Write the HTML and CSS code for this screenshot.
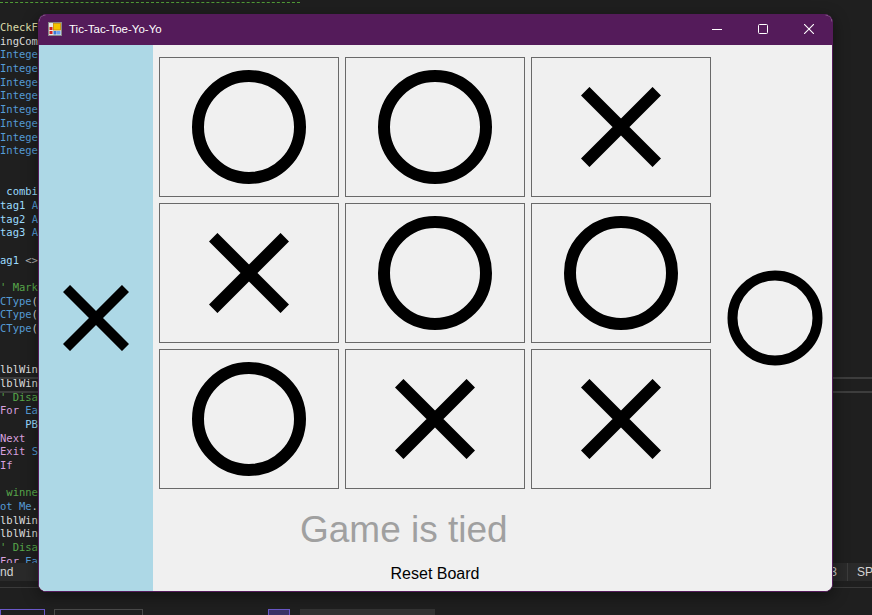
FILE: index.html
```html
<!DOCTYPE html>
<html lang="en">
<head>
<meta charset="utf-8">
<title>Tic-Tac-Toe-Yo-Yo</title>
<link rel="stylesheet" href="styles.css">
</head>
<body>
<div class="desktop">
  <div class="editor">
    <div class="dash"></div>
    <div class="code">
      <div class="ln"><span class="fn">CheckFor</span></div>
      <div class="ln"><span class="df">ingCombi</span></div>
      <div class="ln"><span class="kw">Integer</span></div>
      <div class="ln"><span class="kw">Integer</span></div>
      <div class="ln"><span class="kw">Integer</span></div>
      <div class="ln"><span class="kw">Integer</span></div>
      <div class="ln"><span class="kw">Integer</span></div>
      <div class="ln"><span class="kw">Integer</span></div>
      <div class="ln"><span class="kw">Integer</span></div>
      <div class="ln"><span class="kw">Integer</span></div>
      <div class="ln"> </div>
      <div class="ln"> </div>
      <div class="ln"> <span class="id">combin</span></div>
      <div class="ln"><span class="id">tag1</span> <span class="kw">As</span></div>
      <div class="ln"><span class="id">tag2</span> <span class="kw">As</span></div>
      <div class="ln"><span class="id">tag3</span> <span class="kw">As</span></div>
      <div class="ln"> </div>
      <div class="ln"><span class="id">ag1</span> <span class="op">&lt;&gt;</span></div>
      <div class="ln"> </div>
      <div class="ln"><span class="cm">' Mark</span></div>
      <div class="ln"><span class="kw">CType</span><span class="df">(M</span></div>
      <div class="ln"><span class="kw">CType</span><span class="df">(M</span></div>
      <div class="ln"><span class="kw">CType</span><span class="df">(M</span></div>
      <div class="ln"> </div>
      <div class="ln"> </div>
      <div class="ln sep"><span class="df">lblWinn</span></div>
      <div class="ln sep"><span class="df">lblWinn</span></div>
      <div class="ln"><span class="cm">' Disab</span></div>
      <div class="ln"><span class="ct">For</span> <span class="kw">Eac</span></div>
      <div class="ln">    <span class="id">PB.</span></div>
      <div class="ln"><span class="ct">Next</span></div>
      <div class="ln"><span class="ct">Exit</span> <span class="kw">Su</span></div>
      <div class="ln"><span class="ct">If</span></div>
      <div class="ln"> </div>
      <div class="ln"> <span class="cm">winner</span></div>
      <div class="ln"><span class="kw">ot Me</span><span class="df">.C</span></div>
      <div class="ln"><span class="df">lblWinn</span></div>
      <div class="ln"><span class="df">lblWinn</span></div>
      <div class="ln"><span class="cm">' Disab</span></div>
      <div class="ln"><span class="ct">For</span> <span class="kw">Eac</span></div>
    </div>
  </div>
  <div class="statusbar">
    <span class="st-left">nd</span>
    <span class="st-pos">Ch 3</span>
    <span class="st-box">SPC</span>
  </div>
  <div class="rule"></div>
  <div class="tabs">
    <span class="tab tab-a"></span>
    <span class="tab tab-b"></span>
    <span class="tab tab-c"></span>
    <span class="tab tab-d"></span>
  </div>

  <div class="window">
    <div class="titlebar">
      <svg class="app-icon" width="14" height="14" viewBox="0 0 14 14">
        <rect x="0.5" y="0.5" width="13" height="13" fill="#e8e8e8" stroke="#8a8a8a"/>
        <rect x="1.5" y="5" width="3" height="3" fill="#d02020"/>
        <rect x="1.5" y="9" width="3" height="3" fill="#d02020"/>
        <rect x="5.5" y="1.5" width="7" height="6.5" fill="#f5c400" stroke="#c88a00" stroke-width="0.8"/>
        <rect x="5.5" y="9" width="3" height="3.5" fill="#3a78d8"/>
        <rect x="9" y="9" width="3.5" height="3.5" fill="#6aa0f0"/>
      </svg>
      <span class="title">Tic-Tac-Toe-Yo-Yo</span>
      <div class="caption">
        <span class="cap-btn"><svg width="10" height="10" viewBox="0 0 10 10"><line x1="0" y1="5.5" x2="10" y2="5.5" stroke="#fff" stroke-width="1"/></svg></span>
        <span class="cap-btn"><svg width="10" height="10" viewBox="0 0 10 10"><rect x="0.5" y="0.5" width="9" height="9" rx="1" fill="none" stroke="#fff" stroke-width="1"/></svg></span>
        <span class="cap-btn"><svg width="10" height="10" viewBox="0 0 10 10"><path d="M0 0 L10 10 M10 0 L0 10" stroke="#fff" stroke-width="1.1"/></svg></span>
      </div>
    </div>
    <div class="client">
      <div class="side-panel">
        <svg class="mark" width="66" height="66" viewBox="0 0 66 66"><path d="M3.5 3.5 L62.5 62.5 M62.5 3.5 L3.5 62.5" stroke="#000" stroke-width="10"/></svg>
      </div>
      <div class="main">
        <div class="play">
          <div class="board">
            <div class="cell"><svg width="114" height="114" viewBox="0 0 114 114"><circle cx="57" cy="57" r="51" fill="none" stroke="#000" stroke-width="12"/></svg></div>
            <div class="cell"><svg width="114" height="114" viewBox="0 0 114 114"><circle cx="57" cy="57" r="51" fill="none" stroke="#000" stroke-width="12"/></svg></div>
            <div class="cell"><svg width="80" height="80" viewBox="0 0 80 80"><path d="M4.2 4.2 L75.8 75.8 M75.8 4.2 L4.2 75.8" stroke="#000" stroke-width="12"/></svg></div>
            <div class="cell"><svg width="80" height="80" viewBox="0 0 80 80"><path d="M4.2 4.2 L75.8 75.8 M75.8 4.2 L4.2 75.8" stroke="#000" stroke-width="12"/></svg></div>
            <div class="cell"><svg width="114" height="114" viewBox="0 0 114 114"><circle cx="57" cy="57" r="51" fill="none" stroke="#000" stroke-width="12"/></svg></div>
            <div class="cell"><svg width="114" height="114" viewBox="0 0 114 114"><circle cx="57" cy="57" r="51" fill="none" stroke="#000" stroke-width="12"/></svg></div>
            <div class="cell"><svg width="114" height="114" viewBox="0 0 114 114"><circle cx="57" cy="57" r="51" fill="none" stroke="#000" stroke-width="12"/></svg></div>
            <div class="cell"><svg width="80" height="80" viewBox="0 0 80 80"><path d="M4.2 4.2 L75.8 75.8 M75.8 4.2 L4.2 75.8" stroke="#000" stroke-width="12"/></svg></div>
            <div class="cell"><svg width="80" height="80" viewBox="0 0 80 80"><path d="M4.2 4.2 L75.8 75.8 M75.8 4.2 L4.2 75.8" stroke="#000" stroke-width="12"/></svg></div>
          </div>
          <div class="status">Game is tied</div>
          <button class="reset" type="button">Reset Board</button>
        </div>
        <div class="next-turn">
          <svg width="96" height="96" viewBox="0 0 96 96"><circle cx="48" cy="48" r="42.5" fill="none" stroke="#000" stroke-width="10"/></svg>
        </div>
      </div>
    </div>
  </div>
</div>
</body>
</html>
```
FILE: styles.css
```css
* { box-sizing: border-box; }

html, body {
  margin: 0;
  padding: 0;
  background: #1f1f1f;
}

.desktop {
  position: relative;
  width: 872px;
  height: 615px;
  overflow: hidden;
  display: flex;
  flex-direction: column;
  background: #1f1f1f;
}

/* ---------- background editor ---------- */
.editor {
  height: 563px;
  overflow: hidden;
  flex: none;
}

.dash {
  margin-top: 2px;
  width: 300px;
  border-top: 1px dashed #4f9a36;
}

.code {
  margin-top: 18px;
  font-family: "DejaVu Sans Mono", "Liberation Mono", monospace;
  font-size: 10.5px;
  color: #dcdcdc;
}

.ln {
  height: 13.7px;
  line-height: 13.7px;
  white-space: pre;
}

.ln.sep { box-shadow: 0 2px 0 #3d3d3d; }

.kw { color: #569cd6; }
.ct { color: #d8a0df; }
.id { color: #9cdcfe; }
.fn { color: #dcdcaa; }
.cm { color: #57a64a; }
.op { color: #b4b4b4; }
.df { color: #dcdcdc; }

.statusbar {
  flex: none;
  height: 18px;
  background: #2a2a2a;
  display: flex;
  align-items: center;
  font-family: "Liberation Sans", Arial, sans-serif;
  font-size: 12px;
  color: #d4d4d4;
  white-space: nowrap;
}

.st-left { padding-left: 0; }
.st-pos { margin-left: auto; }
.st-box {
  margin-left: 10px;
  margin-right: -40px;
  width: 65px;
  height: 18px;
  line-height: 18px;
  padding-left: 9px;
  border-left: 1px solid #3c3c3c;
}

.rule {
  flex: none;
  margin-top: 6px;
  height: 1px;
  background: #3a3a3a;
}

.tabs {
  flex: none;
  margin-top: 21px;
  display: flex;
  height: 10px;
}

.tab { display: block; height: 12px; border: 1px solid #555; }
.tab-a { width: 45px; border-color: #6a58c8; }
.tab-b { width: 89px; margin-left: 9px; border-color: #4a4a4a; }
.tab-c { width: 22px; margin-left: 125px; background: #3b3366; border-color: #6a58c8; }
.tab-d { width: 135px; margin-left: 10px; background: #333; border-color: #333; }

/* ---------- the window ---------- */
.window {
  position: absolute;
  left: 38px;
  top: 14px;
  width: 795px;
  height: 578px;
  border: 1px solid #541b5a;
  border-radius: 8px;
  overflow: hidden;
  display: flex;
  flex-direction: column;
  box-shadow: 0 4px 16px rgba(0, 0, 0, 0.45);
  background: #f0f0f0;
}

.titlebar {
  flex: none;
  height: 30px;
  background: #541b5a;
  display: flex;
  align-items: flex-start;
  padding-left: 9px;
}

.app-icon {
  margin-top: 7px;
  flex: none;
}

.title {
  margin-left: 7px;
  margin-top: 7px;
  font-family: "Liberation Sans", Arial, sans-serif;
  font-size: 11.5px;
  line-height: 14px;
  color: #ffffff;
}

.caption {
  margin-left: auto;
  display: flex;
}

.cap-btn {
  width: 46px;
  height: 28px;
  display: flex;
  align-items: center;
  justify-content: center;
}

.cap-btn svg { display: block; }

.client {
  flex: 1;
  display: flex;
  background: #f0f0f0;
}

.side-panel {
  flex: none;
  width: 114px;
  background: #add8e6;
  display: flex;
  align-items: center;
  justify-content: center;
}

.side-panel .mark { display: block; }

.main {
  flex: 1;
  display: flex;
  padding-left: 6px;
  padding-top: 12px;
}

.play {
  display: flex;
  flex-direction: column;
  align-items: flex-start;
  width: 552px;
}

.board {
  display: grid;
  grid-template-columns: repeat(3, 180px);
  grid-template-rows: repeat(3, 140px);
  gap: 6px;
}

.cell {
  border: 1px solid #696969;
  background: #f0f0f0;
  display: flex;
  align-items: center;
  justify-content: center;
}

.cell svg { display: block; }

.status {
  margin-top: 22px;
  margin-left: 141px;
  font-family: "Liberation Sans", Arial, sans-serif;
  font-size: 37px;
  line-height: 37px;
  color: #a0a0a0;
}

.reset {
  margin-top: 18px;
  align-self: center;
  border: none;
  background: transparent;
  padding: 0;
  font-family: "Liberation Sans", Arial, sans-serif;
  font-size: 16px;
  line-height: 16px;
  color: #000;
}

.next-turn {
  align-self: center;
  margin-left: 16px;
  margin-top: -12px;
}

.next-turn svg { display: block; }
```
